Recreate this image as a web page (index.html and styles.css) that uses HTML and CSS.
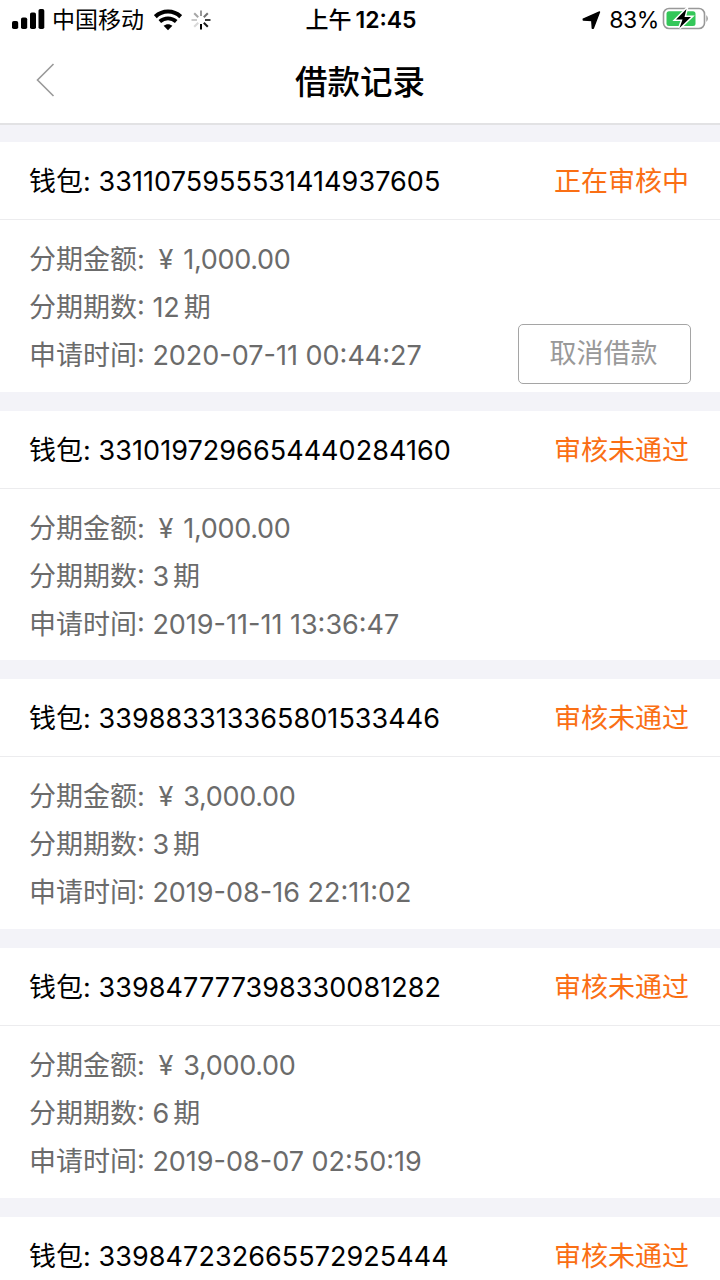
FILE: index.html
```html
<!DOCTYPE html>
<html lang="zh-CN">

<head>
    <meta charset="UTF-8">
    <meta name="viewport" content="width=device-width, initial-scale=1.0">
    <title>借款记录</title>
    <link rel="stylesheet" href="styles.css">
</head>

<body>
    <header>
        <!-- 状态栏 -->
        <div class="status-bar">
            <div class="bar-left">
                <svg class="signal" width="34" height="22" viewBox="0 0 34 22">
                    <rect x="0" y="13" width="6.2" height="8" rx="1.8" />
                    <rect x="9" y="9.5" width="6.2" height="11.5" rx="1.8" />
                    <rect x="18" y="4.5" width="6" height="16.5" rx="1.8" />
                    <rect x="26.5" y="1" width="5.8" height="20" rx="1.8" />
                </svg>
                <span class="carrier">中国移动</span>
                <svg class="wifi" width="28" height="22" viewBox="0 0 28 22">
                    <path d="M1.300 7.600C8.500.8 19.500.8 26.700 7.600" fill="none" stroke="#000" stroke-width="4.200" />
                    <path d="M5.800 12.500C10.600 8.200 17.400 8.200 22.200 12.500" fill="none" stroke="#000" stroke-width="3.800" />
                    <path d="M14 21.200L9.600 16.800C12.200 14.600 15.800 14.600 18.400 16.800Z" />
                </svg>
                <svg class="loading" width="20" height="20" viewBox="0 0 20 20" stroke="#000" stroke-width="2">
                    <path d="M10 14v5.500" />
                    <path d="M12.800 12.800l4 4" opacity=".9" />
                    <path d="M14 10h5.500" opacity=".75" />
                    <path d="M12.800 7.200l4-4" opacity=".55" />
                    <path d="M10 6V.5" opacity=".4" />
                    <path d="M7.200 7.200l-4-4" opacity=".35" />
                    <path d="M6 10H.5" opacity=".2" />
                    <path d="M7.200 12.800l-4 4" opacity=".15" />
                </svg>
            </div>
            <div class="time">上午<span>12:45</span></div>
            <div class="bar-right">
                <svg class="location" width="19" height="19" viewBox="0 0 19 19">
                    <path d="M17.500 1L11.300 17.200 10.300 17.200 9.800 9.600 1.400 9.100 1.200 8.100Z" stroke="#000" stroke-width="1.400" stroke-linejoin="round" />
                </svg>
                <span class="percent">83%</span>
                <svg class="battery" width="48" height="24" viewBox="0 0 48 24">
                    <rect x="1.500" y="1.500" width="41" height="20" rx="5.500" fill="#fff" stroke="#999" stroke-width="1.600" />
                    <rect x="4.500" y="4.200" width="29" height="14.800" rx="2.500" fill="#34c759" />
                    <path d="M44.300 8q3.200 3.500 0 7z" fill="#999" />
                    <path d="M24.500 2L14 12.500h6.500l-3 8.500L29 10h-6.500z" stroke="#fff" stroke-width="3" paint-order="stroke" />
                </svg>
            </div>
        </div>
        <div class="nav">
            <a class="back" href="#">
                <svg width="20" height="34" viewBox="0 0 20 34">
                    <path d="M18.500 1L2.500 17l16 16" fill="none" stroke="#999" stroke-width="1.600" />
                </svg>
            </a>
            <h1>借款记录</h1>
        </div>
    </header>

    <!-- 借款列表 -->
    <ul class="list">
        <li>
            <div class="title">
                <p>钱包: <span>3311075955531414937605</span></p>
                <em>正在审核中</em>
            </div>
            <div class="info">
                <p>分期金额: <span class="money">¥ 1,000.00</span></p>
                <p>分期期数: <span class="num">12</span>期</p>
                <p>申请时间: <span>2020-07-11 00:44:27</span></p>
                <button class="cancel">取消借款</button>
            </div>
        </li>
        <li>
            <div class="title">
                <p>钱包: <span>3310197296654440284160</span></p>
                <em>审核未通过</em>
            </div>
            <div class="info">
                <p>分期金额: <span class="money">¥ 1,000.00</span></p>
                <p>分期期数: <span class="num">3</span>期</p>
                <p>申请时间: <span>2019-11-11 13:36:47</span></p>
            </div>
        </li>
        <li>
            <div class="title">
                <p>钱包: <span>339883313365801533446</span></p>
                <em>审核未通过</em>
            </div>
            <div class="info">
                <p>分期金额: <span class="money">¥ 3,000.00</span></p>
                <p>分期期数: <span class="num">3</span>期</p>
                <p>申请时间: <span>2019-08-16 22:11:02</span></p>
            </div>
        </li>
        <li>
            <div class="title">
                <p>钱包: <span>339847777398330081282</span></p>
                <em>审核未通过</em>
            </div>
            <div class="info">
                <p>分期金额: <span class="money">¥ 3,000.00</span></p>
                <p>分期期数: <span class="num">6</span>期</p>
                <p>申请时间: <span>2019-08-07 02:50:19</span></p>
            </div>
        </li>
        <li>
            <div class="title">
                <p>钱包: <span>339847232665572925444</span></p>
                <em>审核未通过</em>
            </div>
        </li>
    </ul>
</body>

</html>
```
FILE: styles.css
```css
* {
    padding: 0;
    margin: 0;
    box-sizing: border-box;
    list-style: none;
    text-decoration: none;
}

body {
    height: 1280px;
    overflow: hidden;
    background-color: #f3f3f8;
    font-family: Inter, "Noto Sans CJK SC", sans-serif;
    font-size: 27px;
    color: #000;
}

header {
    height: 125px;
    background-color: #fff;
    border-bottom: 2px solid #e2e2e4;
}

.status-bar {
    display: grid;
    grid-template-columns: 1fr auto 1fr;
    align-items: center;
    height: 40px;
    padding: 0 10px 0 12px;
    font-size: 23px;
    line-height: 40px;
}

.bar-left,
.bar-right {
    display: flex;
    align-items: center;
}

.bar-right {
    justify-content: flex-end;
}

.signal {
    margin-top: -2px;
}

.carrier {
    margin-left: 6px;
}

.wifi {
    margin-left: 10px;
}

.loading {
    margin-left: 9px;
}

.time {
    font-weight: 500;
}

.time span {
    margin-left: 4px;
    font-size: 23px;
    font-weight: 600;
}

.percent {
    margin: 0 3px 0 8px;
    letter-spacing: -.4px;
}

.battery {
    margin-top: -2px;
}

.nav {
    display: grid;
    grid-template-columns: 60px 1fr 60px;
    align-items: center;
    height: 80px;
}

.back {
    display: flex;
    padding-left: 35px;
}

.nav h1 {
    margin-top: -2px;
    font-size: 32.500px;
    font-weight: 500;
    text-align: center;
}

.list {
    height: 1155px;
    padding-top: 17px;
    overflow: hidden;
}

.list li {
    height: 249.700px;
    margin-bottom: 19px;
    background-color: #fff;
}

.title {
    display: flex;
    justify-content: space-between;
    height: 78px;
    padding: 0 31px 0 29px;
    border-bottom: 1px solid #ececee;
    line-height: 79px;
}

.title p {
    letter-spacing: .05px;
}

.title em {
    font-style: normal;
    color: #fa6f14;
}

.info {
    position: relative;
    padding: 16px 30px 11px 29px;
    line-height: 48px;
    color: #6b6b6b;
}

.info .num {
    margin-right: 4px;
}

.info .money {
    margin-left: 6px;
    word-spacing: 3px;
    letter-spacing: -.3px;
}

.cancel {
    position: absolute;
    right: 29px;
    bottom: 7px;
    width: 173px;
    height: 60px;
    padding-right: 2px;
    border: 1px solid #a5a5a5;
    border-radius: 5px;
    background-color: #fff;
    font-family: inherit;
    font-size: 27px;
    line-height: 58px;
    color: #999;
}
```
